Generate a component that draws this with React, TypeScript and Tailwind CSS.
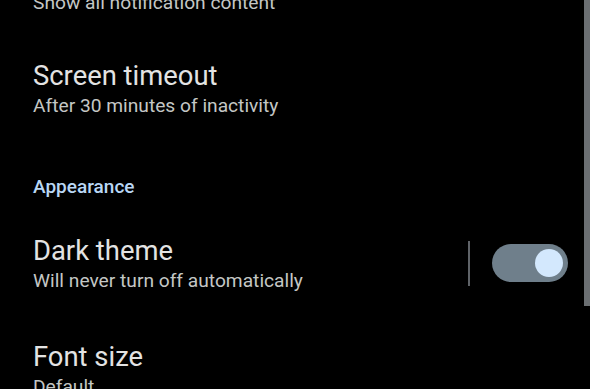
const font = { fontFamily: 'Roboto, "Noto Sans", sans-serif' };

function Row({ title, summary }: { title: string; summary: string }) {
  return (
    <div className="flex flex-col">
      <span className="text-[27.4px] leading-[32px] text-[#e3e3e3]">{title}</span>
      <span className="text-[19.2px] leading-[28px] text-[#c4c7c5]">{summary}</span>
    </div>
  );
}

export default function App() {
  return (
    <div style={font} className="relative w-[590px] h-[389px] overflow-hidden bg-black">
      <div className="flex flex-col pl-[33px] -mt-[11px]">
        <span className="text-[19.2px] leading-[28px] text-[#c4c7c5]">Show all notification content</span>

        <div className="mt-[43px]">
          <Row title="Screen timeout" summary="After 30 minutes of inactivity" />
        </div>

        <span className="mt-[54px] text-[19px] leading-[26px] font-medium text-[#b9d7f5]">Appearance</span>

        <div className="mt-[35px] flex items-center pr-[22px]">
          <div className="flex-1">
            <Row title="Dark theme" summary="Will never turn off automatically" />
          </div>
          <div className="flex items-center mb-[4px]">
            <div className="w-[2px] h-[45px] bg-[#5f6368]" />
            <div className="ml-[22px] w-[76px] h-[38px] rounded-full bg-[#6f7f8b] flex items-center justify-end pr-[5px]">
              <div className="w-[28px] h-[28px] rounded-full bg-[#d3e8fd]" />
            </div>
          </div>
        </div>

        <div className="mt-[46px]">
          <Row title="Font size" summary="Default" />
        </div>
      </div>

      {/* scrollbar */}
      <div className="absolute right-0 top-0 w-[6px] h-[306px] bg-[#6b6f72]" />
    </div>
  );
}
